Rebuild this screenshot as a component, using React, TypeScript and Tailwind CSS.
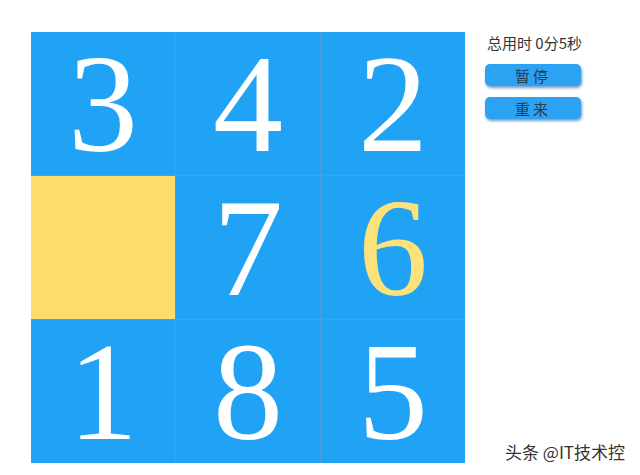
const tiles: (number | null)[] = [3, 4, 2, null, 7, 6, 1, 8, 5]

export default function App() {
  return (
    <div className="relative w-[640px] h-[475px] bg-white overflow-hidden">
      <div className="flex items-start pt-[32px] pl-[31px]">
        <div className="grid grid-cols-[repeat(3,144px)] grid-rows-[repeat(3,143px)] gap-px bg-[#4a9fd6] w-[434px] h-[431px]">
          {tiles.map((n, i) => (
            <div
              key={i}
              className={
                n === null
                  ? "bg-[#fedc6c]"
                  : "bg-[#21a3f5] flex items-center justify-center"
              }
            >
              {n !== null && (
                <span
                  className={
                    "font-['Liberation_Serif',serif] text-[140px] leading-[130px] " +
                    (n === 6 ? "text-[#fde27c]" : "text-white")
                  }
                >
                  {n}
                </span>
              )}
            </div>
          ))}
        </div>
        <div className="ml-[20px] flex flex-col font-['Noto_Sans_CJK_SC','Liberation_Sans',sans-serif]">
          <p className="text-[15px] leading-[20px] text-[#333] mt-[1px] pl-[2px]">
            总用时 0分5秒
          </p>
          <button className="mt-[11px] w-[96px] h-[22px] rounded-[5px] bg-[#2ca2f2] shadow-[1px_2px_3px_rgba(20,90,160,0.6)] text-[15px] leading-none tracking-[3px] text-[#2b3b4c]">
            暂停
          </button>
          <button className="mt-[11px] w-[96px] h-[22px] rounded-[5px] bg-[#2ca2f2] shadow-[1px_2px_3px_rgba(20,90,160,0.6)] text-[15px] leading-none tracking-[3px] text-[#2b3b4c]">
            重来
          </button>
        </div>
      </div>
      <div className="absolute left-[505px] top-[441px] text-[17px] leading-[22px] text-[#333] font-['Noto_Sans_CJK_SC',sans-serif] [text-shadow:0_0_2px_#fff]">
        头条 @IT技术控
      </div>
    </div>
  )
}
